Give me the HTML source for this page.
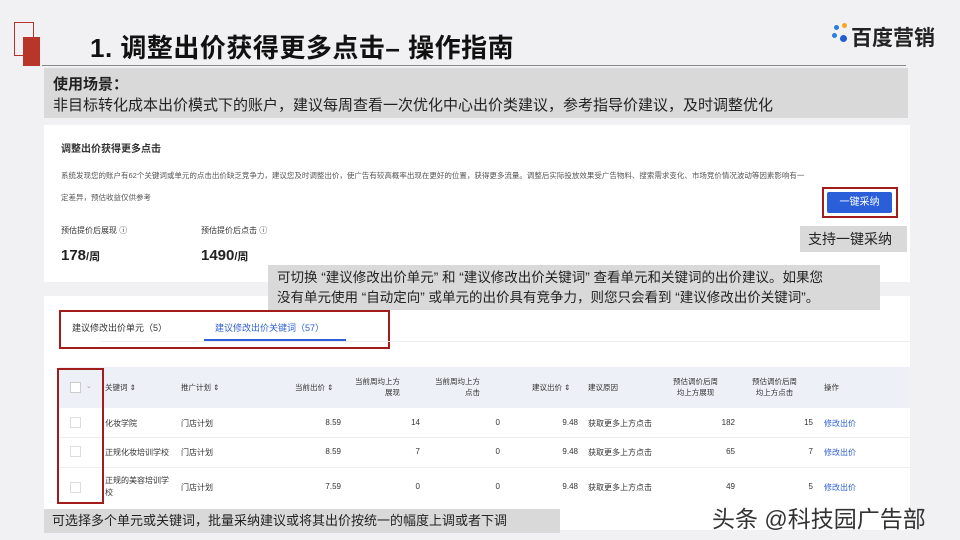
<!DOCTYPE html>
<html><head><meta charset="utf-8"><style>
*{margin:0;padding:0;box-sizing:border-box}
body{width:960px;height:540px;overflow:hidden;background:#f1f1f3;font-family:"Liberation Sans","Noto Sans CJK SC",sans-serif;position:relative;color:#222}
.a{position:absolute;white-space:nowrap}
.s{font-size:8px;color:#333}
.h{font-size:7.5px;color:#333;line-height:11px}
.r{text-align:right}
.blue{color:#2f5fd6}
</style></head><body>
<div class="a" style="left:14px;top:22px;width:20px;height:34px;border:1px solid #b5352b"></div>
<div class="a" style="left:23px;top:37px;width:17px;height:29px;background:#b8352a"></div>
<div class="a" style="left:90px;top:28px;font-size:26px;font-weight:bold;color:#111;letter-spacing:0.5px">1. 调整出价获得更多点击– 操作指南</div>
<div class="a" style="left:42px;top:65px;width:864px;height:1px;background:#888"></div>
<div class="a" style="left:832px;top:21px;width:18px;height:24px">
<span class="a" style="left:2px;top:4px;width:5px;height:5px;border-radius:50%;background:#2a7de1"></span>
<span class="a" style="left:10px;top:2px;width:5px;height:5px;border-radius:50%;background:#f5a623"></span>
<span class="a" style="left:0px;top:12px;width:5px;height:5px;border-radius:50%;background:#2a7de1"></span>
<span class="a" style="left:8px;top:14px;width:7px;height:7px;border-radius:50%;background:#1f5fd0"></span>
</div>
<div class="a" style="left:851px;top:22px;font-size:21px;font-weight:bold;color:#222">百度营销</div>
<div class="a" style="left:44px;top:68px;width:864px;height:50px;background:#d9d9d9"></div>
<div class="a" style="left:53px;top:73px;font-size:15px;font-weight:bold">使用场景：</div>
<div class="a" style="left:53px;top:94px;font-size:15px">非目标转化成本出价模式下的账户，建议每周查看一次优化中心出价类建议，参考指导价建议，及时调整优化</div>

<div class="a" style="left:44px;top:125px;width:866px;height:157px;background:#fff"></div>
<div class="a" style="left:61px;top:140px;font-size:10px;font-weight:bold;color:#333">调整出价获得更多点击</div>
<div class="a" style="left:61px;top:170px;font-size:7.5px;color:#555">系统发现您的账户有62个关键词或单元的点击出价缺乏竞争力，建议您及时调整出价，使广告有较高概率出现在更好的位置，获得更多流量。调整后实际投放效果受广告物料、搜索需求变化、市场竞价情况波动等因素影响有一</div>
<div class="a" style="left:61px;top:192px;font-size:7.5px;color:#555">定差异，预估收益仅供参考</div>
<div class="a" style="left:822px;top:187px;width:76px;height:31px;border:2px solid #a31c1c"></div>
<div class="a" style="left:827px;top:192px;width:65px;height:21px;background:#2b5fd9;color:#fff;font-size:10px;text-align:center;line-height:21px;border-radius:2px">一键采纳</div>
<div class="a" style="left:61px;top:225px;font-size:8px;color:#333">预估提价后展现 ⓘ</div>
<div class="a" style="left:201px;top:225px;font-size:8px;color:#333">预估提价后点击 ⓘ</div>
<div class="a" style="left:61px;top:247px;font-size:15px;font-weight:bold">178<span style="font-size:11px">/周</span></div>
<div class="a" style="left:201px;top:247px;font-size:15px;font-weight:bold">1490<span style="font-size:11px">/周</span></div>
<div class="a" style="left:800px;top:226px;width:107px;height:26px;background:#d9d9d9;font-size:14px;line-height:26px;padding-left:8px">支持一键采纳</div>

<div class="a" style="left:44px;top:296px;width:866px;height:234px;background:#fff"></div>
<div class="a" style="left:268px;top:265px;width:612px;height:45px;background:#d9d9d9;font-size:13.5px;line-height:20px;padding:3px 0 0 9px">可切换 “建议修改出价单元” 和 “建议修改出价关键词” 查看单元和关键词的出价建议。如果您<br>没有单元使用 “自动定向” 或单元的出价具有竞争力，则您只会看到 “建议修改出价关键词”。</div>
<div class="a" style="left:59px;top:310px;width:331px;height:39px;border:2px solid #a31c1c"></div>
<div class="a" style="left:72px;top:321px;font-size:9px;color:#333">建议修改出价单元（5）</div>
<div class="a blue" style="left:215px;top:321px;font-size:9px">建议修改出价关键词（57）</div>
<div class="a" style="left:204px;top:339px;width:142px;height:2px;background:#2f5fd6"></div>
<div class="a" style="left:100px;top:341px;width:810px;height:1px;background:#eee"></div>

<div class="a" style="left:59px;top:367px;width:851px;height:41px;background:#eef0f7"></div>
<div class="a" style="left:59px;top:437px;width:851px;height:1px;background:#eee"></div>
<div class="a" style="left:59px;top:467px;width:851px;height:1px;background:#eee"></div>
<div class="a" style="left:70px;top:382px;width:11px;height:11px;border:1px solid #ccc;background:#fff"></div>
<div class="a" style="left:86px;top:382px;font-size:7px;color:#999">⌄</div>
<div class="a h" style="left:105px;top:382px">关键词 ⇕</div>
<div class="a h" style="left:181px;top:382px">推广计划 ⇕</div>
<div class="a h" style="left:295px;top:382px">当前出价 ⇕</div>
<div class="a h r" style="left:355px;top:376px">当前周均上方<br>展现</div>
<div class="a h r" style="left:435px;top:376px">当前周均上方<br>点击</div>
<div class="a h" style="left:532px;top:382px">建议出价 ⇕</div>
<div class="a h" style="left:588px;top:382px">建议原因</div>
<div class="a h" style="left:673px;top:376px;text-align:center">预估调价后周<br>均上方展现</div>
<div class="a h" style="left:752px;top:376px;text-align:center">预估调价后周<br>均上方点击</div>
<div class="a h" style="left:824px;top:382px">操作</div>

<div class="a" style="left:70px;top:417px;width:11px;height:11px;border:1px solid #ddd"></div>
<div class="a" style="left:70px;top:446px;width:11px;height:11px;border:1px solid #ddd"></div>
<div class="a" style="left:70px;top:482px;width:11px;height:11px;border:1px solid #ddd"></div>

<div class="a s" style="left:105px;top:418px">化妆学院</div>
<div class="a s" style="left:105px;top:447px">正规化妆培训学校</div>
<div class="a s" style="left:105px;top:475px;line-height:12px">正规的美容培训学<br>校</div>
<div class="a s" style="left:181px;top:418px">门店计划</div>
<div class="a s" style="left:181px;top:447px">门店计划</div>
<div class="a s" style="left:181px;top:482px">门店计划</div>

<div class="a s r" style="left:300px;width:41px;top:418px">8.59</div>
<div class="a s r" style="left:300px;width:41px;top:447px">8.59</div>
<div class="a s r" style="left:300px;width:41px;top:482px">7.59</div>
<div class="a s r" style="left:380px;width:40px;top:418px">14</div>
<div class="a s r" style="left:380px;width:40px;top:447px">7</div>
<div class="a s r" style="left:380px;width:40px;top:482px">0</div>
<div class="a s r" style="left:460px;width:40px;top:418px">0</div>
<div class="a s r" style="left:460px;width:40px;top:447px">0</div>
<div class="a s r" style="left:460px;width:40px;top:482px">0</div>
<div class="a s r" style="left:538px;width:40px;top:418px">9.48</div>
<div class="a s r" style="left:538px;width:40px;top:447px">9.48</div>
<div class="a s r" style="left:538px;width:40px;top:482px">9.48</div>
<div class="a s" style="left:588px;top:418px">获取更多上方点击</div>
<div class="a s" style="left:588px;top:447px">获取更多上方点击</div>
<div class="a s" style="left:588px;top:482px">获取更多上方点击</div>
<div class="a s r" style="left:695px;width:40px;top:418px">182</div>
<div class="a s r" style="left:695px;width:40px;top:447px">65</div>
<div class="a s r" style="left:695px;width:40px;top:482px">49</div>
<div class="a s r" style="left:773px;width:40px;top:418px">15</div>
<div class="a s r" style="left:773px;width:40px;top:447px">7</div>
<div class="a s r" style="left:773px;width:40px;top:482px">5</div>
<div class="a s blue" style="left:824px;top:418px">修改出价</div>
<div class="a s blue" style="left:824px;top:447px">修改出价</div>
<div class="a s blue" style="left:824px;top:482px">修改出价</div>

<div class="a" style="left:57px;top:368px;width:47px;height:136px;border:2px solid #a31c1c"></div>
<div class="a" style="left:44px;top:509px;width:516px;height:24px;background:#d9d9d9;font-size:13px;line-height:24px;padding-left:8px">可选择多个单元或关键词，批量采纳建议或将其出价按统一的幅度上调或者下调</div>
<div class="a" style="left:712px;top:500px;font-size:23px;color:#333">头条 @科技园广告部</div>
</body></html>
